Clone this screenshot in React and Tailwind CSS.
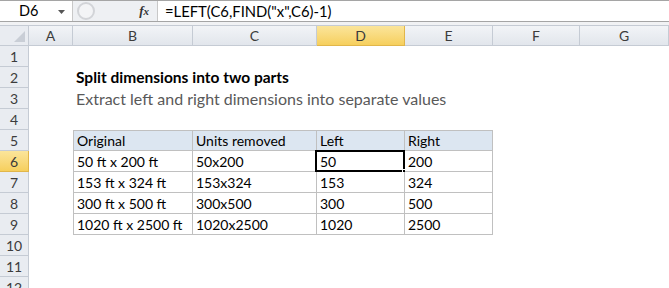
const COLS = [
  { key: 'A', w: 'w-[44px]' },
  { key: 'B', w: 'w-[120px]' },
  { key: 'C', w: 'w-[124px]' },
  { key: 'D', w: 'w-[88px]' },
  { key: 'E', w: 'w-[88px]' },
  { key: 'F', w: 'w-[87px]' },
  { key: 'G', w: 'flex-1' },
];

const DATA = [
  ['Original', 'Units removed', 'Left', 'Right'],
  ['50 ft x 200 ft', '50x200', '50', '200'],
  ['153 ft x 324 ft', '153x324', '153', '324'],
  ['300 ft x 500 ft', '300x500', '300', '500'],
  ['1020 ft x 2500 ft', '1020x2500', '1020', '2500'],
];

const font = { fontFamily: 'Lato, "Open Sans", sans-serif' };

function RowHead({ n }) {
  const sel = n === 6;
  return (
    <div
      className={`w-[29px] shrink-0 h-full flex items-center justify-center text-[14px] border-r border-b ${
        sel
          ? 'bg-gradient-to-b from-[#fbe59a] to-[#f6cf5c] border-[#e1b64a] text-[#3a3a3a]'
          : 'bg-[#e9ecf1] border-[#c5cbd4] text-[#3c3c3c]'
      }`}
    >
      {n}
    </div>
  );
}

function TableRow({ r }) {
  const cells = DATA[r];
  const head = r === 0;
  const widths = ['w-[120px]', 'w-[124px]', 'w-[88px]', 'w-[88px]'];
  return (
    <div className="flex h-full">
      {cells.map((c, i) => {
        const selected = r === 1 && i === 2;
        return (
          <div
            key={i}
            className={`${widths[i]} relative h-full flex items-center pl-[3px] text-[14px] text-black border-r border-b border-[#c0c0c0] ${
              head ? 'bg-[#dce6f1]' : 'bg-white'
            } ${i === 0 ? 'border-l' : ''} ${head ? 'border-t' : ''}`}
          >
            {c}
            {selected && (
              <>
                <div className="absolute -left-[2px] -top-[1px] -right-[1px] -bottom-[1px] border-2 border-black pointer-events-none" />
                <div className="absolute -right-[4px] -bottom-[4px] w-[6px] h-[6px] bg-black border border-white" />
              </>
            )}
          </div>
        );
      })}
    </div>
  );
}

export default function App() {
  const rows = [1, 2, 3, 4, 5, 6, 7, 8, 9, 10, 11, 12];
  return (
    <div className="w-[669px] h-[288px] overflow-hidden bg-white text-black" style={font}>
      {/* formula bar */}
      <div className="h-[22px] flex items-center border-t border-b border-[#a5a5a5] bg-white">
        <div className="w-[72px] h-full flex items-center pl-[19px] text-[14.5px] relative">
          D6
          <svg className="absolute left-[58px] top-[9px]" width="7" height="4" viewBox="0 0 7 4">
            <path d="M0 0h7L3.5 4z" fill="#555" />
          </svg>
        </div>
        <div className="w-[86px] h-full flex items-center bg-[#eef0f3] border-l border-r border-[#c8c8c8] relative">
          <div className="absolute left-[4px] top-[1px] w-[18px] h-[18px] rounded-full border-2 border-[#d2d4d8] bg-[#f3f4f6]" />
          <span className="ml-auto mr-[8px] italic font-bold text-[13px] text-[#333]" style={{ fontFamily: '"Liberation Serif", serif' }}>
            f<span className="text-[11px]">x</span>
          </span>
        </div>
        <div className="flex-1 h-full flex items-center pl-[7px] text-[14.8px]">
          =LEFT(C6,FIND("x",C6)-1)
        </div>
      </div>
      <div className="h-[3px] bg-[#f1f2f4]" />
      {/* column headers */}
      <div className="h-[21px] flex border-t border-[#c5cbd4]">
        <div className="w-[29px] shrink-0 h-full bg-[#e9ecf1] border-r border-b border-[#c5cbd4] relative">
          <svg className="absolute right-[3px] bottom-[3px]" width="11" height="11" viewBox="0 0 11 11">
            <path d="M11 0V11H0z" fill="#c9ced6" />
          </svg>
        </div>
        {COLS.map((c) => (
          <div
            key={c.key}
            className={`${c.w} shrink-0 h-full flex items-center justify-center text-[14px] border-r border-b ${
              c.key === 'D'
                ? 'bg-gradient-to-b from-[#fbe59a] to-[#f6cf5c] border-[#e1b64a] text-[#3a3a3a]'
                : 'bg-gradient-to-b from-[#f2f4f7] to-[#e2e6ec] border-[#c5cbd4] text-[#3c3c3c]'
            }`}
          >
            {c.key}
          </div>
        ))}
      </div>
      {/* rows */}
      {rows.map((n) => (
        <div key={n} className="h-[21px] flex">
          <RowHead n={n} />
          <div className="w-[44px] shrink-0" />
          <div className="flex-1 h-full">
            {n === 2 && (
              <div className="h-full flex items-center pl-[3px] text-[15.5px] font-bold">
                Split dimensions into two parts
              </div>
            )}
            {n === 3 && (
              <div className="h-full flex items-center pl-[3px] text-[16px] text-[#595959]">
                Extract left and right dimensions into separate values
              </div>
            )}
            {n >= 5 && n <= 9 && <TableRow r={n - 5} />}
          </div>
        </div>
      ))}
    </div>
  );
}
